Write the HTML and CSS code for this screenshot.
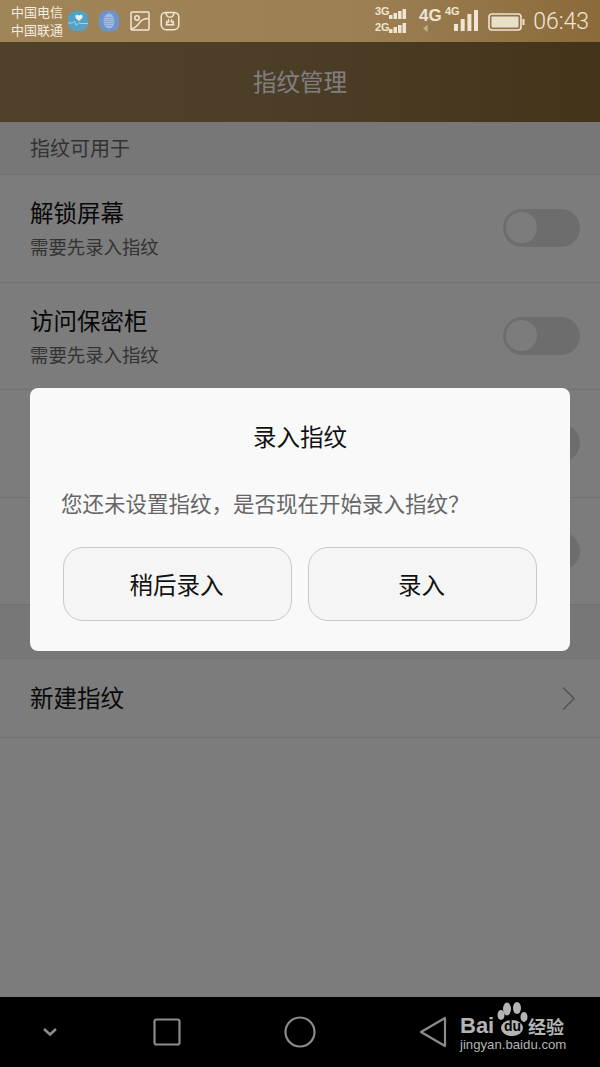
FILE: index.html
```html
<!DOCTYPE html>
<html lang="zh-CN">
<head>
    <meta charset="UTF-8">
    <meta name="viewport" content="width=device-width, initial-scale=1.0">
    <title>指纹管理</title>
    <link rel="stylesheet" href="styles.css">
</head>
<body>
    <div class="phone">
        <!-- status bar -->
        <div class="status-bar">
            <div class="carrier">
                <span>中国电信</span>
                <span>中国联通</span>
            </div>
            <div class="notify-icons">
                <svg width="22" height="22" viewBox="0 0 22 22">
                    <defs>
                        <linearGradient id="healthBg" x1="0" y1="0" x2="0" y2="1">
                            <stop offset="0" stop-color="#4aa4c4"/>
                            <stop offset="1" stop-color="#5b9fc8"/>
                        </linearGradient>
                    </defs>
                    <rect x="1" y="1" width="20" height="20" rx="8" fill="url(#healthBg)"/>
                    <path d="M12 11C8.500 8.800 8 7 8.500 5.600C9.200 4.300 11.200 4.400 12 5.800C12.800 4.400 14.800 4.300 15.500 5.600C16 7 15.500 8.800 12 11Z" fill="#e6f0f2"/>
                    <path d="M1 13H5.500L7.500 11L9.500 15.500L12 12.500L14 13.500H21" fill="none" stroke="#a8d2de" stroke-width="1"/>
                </svg>
                <svg width="22" height="22" viewBox="0 0 22 22">
                    <rect x="1" y="0.500" width="20" height="21" rx="8" fill="#6c93cc"/>
                    <ellipse cx="11" cy="11" rx="5.500" ry="7.500" fill="#a3bbdb"/>
                    <path d="M6 7.500H16M5.500 9.500H16.500M5.500 11.500H16.500M6 13.500H16M7.500 15.500H14.500" stroke="#7c9fd0" stroke-width="0.700"/>
                </svg>
                <svg width="20" height="20" viewBox="0 0 20 20" fill="none" stroke="#f2e8d6" stroke-width="1.500">
                    <rect x="1" y="1" width="18" height="18" rx="1"/>
                    <circle cx="7" cy="7" r="2.200"/>
                    <path d="M1.500 18C6.500 16.500 8 14 10 11C12 8.500 15 7.500 18.500 7.500"/>
                </svg>
                <svg width="20" height="20" viewBox="0 0 20 20" fill="none" stroke="#f2e8d6" stroke-width="1.500">
                    <path d="M5.500 1.500H14.500C17 1.500 18.800 3.500 18.800 6V13.500C18.800 16.500 16.500 18.800 13.500 18.800H6.500C3.500 18.800 1.200 16.500 1.200 13.500V6C1.200 3.500 3 1.500 5.500 1.500Z"/>
                    <path d="M6 2C6.500 5 8 6.300 10 6.300C12 6.300 13.500 5 14 2"/>
                    <g fill="#f2e8d6" stroke="none">
                        <ellipse cx="8.500" cy="10" rx="0.900" ry="2"/>
                        <ellipse cx="11.500" cy="10" rx="0.900" ry="2"/>
                        <ellipse cx="6.800" cy="11.500" rx="0.900" ry="2"/>
                        <ellipse cx="13.200" cy="11.500" rx="0.900" ry="2"/>
                        <rect x="5.500" y="13" width="9" height="1.500" rx="0.700"/>
                    </g>
                </svg>
            </div>
            <div class="net-icons">
                <svg width="32" height="42" viewBox="0 0 32 42" fill="#efe5d2">
                    <text x="0" y="15" class="net-small">3G</text>
                    <text x="0" y="31" class="net-small">2G</text>
                    <rect x="14" y="15" width="3.500" height="4"/>
                    <rect x="18.500" y="13" width="3.500" height="6"/>
                    <rect x="23" y="11" width="3.500" height="8"/>
                    <rect x="27.500" y="9" width="3.500" height="10"/>
                    <rect x="14" y="29" width="3.500" height="4"/>
                    <rect x="18.500" y="27" width="3.500" height="6"/>
                    <rect x="23" y="25" width="3.500" height="8"/>
                    <rect x="27.500" y="23" width="3.500" height="10"/>
                </svg>
                <svg class="lte" width="23" height="42" viewBox="0 0 23 42">
                    <text x="0" y="21" class="net-big" fill="#efe5d2">4G</text>
                    <path d="M8.500 25V32L4 28.500Z" fill="#c2b08c"/>
                    <path d="M10.500 25V32L15 28.500Z" fill="#8a7550"/>
                </svg>
                <svg class="lte-signal" width="33" height="42" viewBox="0 0 33 42" fill="#efe5d2">
                    <text x="0" y="15" class="net-small">4G</text>
                    <rect x="9" y="24" width="4" height="7"/>
                    <rect x="15.700" y="19" width="4" height="12"/>
                    <rect x="22.400" y="14" width="4" height="17"/>
                    <rect x="29" y="10" width="4" height="21"/>
                </svg>
                <svg class="battery" width="37" height="42" viewBox="0 0 37 42">
                    <rect x="1" y="14" width="32" height="16" rx="3" fill="none" stroke="#efe5d2" stroke-width="1.600"/>
                    <rect x="3.500" y="16.500" width="27" height="11" rx="1" fill="#e8dfc9"/>
                    <rect x="34.500" y="19" width="2" height="6" fill="#efe5d2"/>
                </svg>
                <span class="clock">06:43</span>
            </div>
        </div>

        <div class="screen">
            <div class="title-bar">指纹管理</div>

            <div class="section-head">指纹可用于</div>
            <div class="row">
                <div>
                    <div class="row-title">解锁屏幕</div>
                    <div class="row-sub">需要先录入指纹</div>
                </div>
                <div class="switch"></div>
            </div>
            <div class="row">
                <div>
                    <div class="row-title">访问保密柜</div>
                    <div class="row-sub">需要先录入指纹</div>
                </div>
                <div class="switch"></div>
            </div>
            <div class="row">
                <div></div>
                <div class="switch"></div>
            </div>
            <div class="row">
                <div></div>
                <div class="switch"></div>
            </div>
            <div class="section-head section-empty"></div>
            <div class="row row-short">
                <div class="row-title">新建指纹</div>
                <svg class="chevron" width="15" height="25" viewBox="0 0 15 25" fill="none" stroke="#a8a8a8" stroke-width="1.500">
                    <path d="M2 1.500L13 12.500L2 23.500"/>
                </svg>
            </div>

            <div class="overlay">
                <div class="dialog">
                    <h2 class="dialog-title">录入指纹</h2>
                    <p class="dialog-text">您还未设置指纹，是否现在开始录入指纹？</p>
                    <div class="dialog-buttons">
                        <button type="button">稍后录入</button>
                        <button type="button">录入</button>
                    </div>
                </div>
            </div>
        </div>

        <!-- nav bar -->
        <div class="nav-bar">
            <svg width="16" height="10" viewBox="0 0 16 10" fill="none" stroke="#8c8c8c" stroke-width="2.500">
                <path d="M2 2L8 7.500L14 2"/>
            </svg>
            <svg width="28" height="28" viewBox="0 0 28 28" fill="none" stroke="#8c8c8c" stroke-width="2.200">
                <rect x="1.500" y="1.500" width="25" height="25" rx="2"/>
            </svg>
            <svg width="32" height="32" viewBox="0 0 32 32" fill="none" stroke="#8c8c8c" stroke-width="2.200">
                <circle cx="16" cy="16" r="14.500"/>
            </svg>
            <svg width="28" height="32" viewBox="0 0 28 32" fill="none" stroke="#8c8c8c" stroke-width="2.200">
                <path d="M26 2V30L2 16Z" stroke-linejoin="round"/>
            </svg>

            <div class="watermark">
                <div class="wm-top">
                    <span class="wm-bai">Bai</span>
                    <div class="wm-paw">
                        <svg width="32" height="34" viewBox="0 0 32 34" fill="#b4b4b4">
                            <ellipse cx="10" cy="7" rx="4" ry="6.500"/>
                            <ellipse cx="20" cy="6" rx="4" ry="6"/>
                            <ellipse cx="4" cy="13" rx="3.500" ry="5"/>
                            <ellipse cx="27" cy="15" rx="3.500" ry="5"/>
                            <ellipse cx="15" cy="26" rx="11" ry="8"/>
                        </svg>
                        <span class="wm-du">du</span>
                    </div>
                    <span class="wm-cn">经验</span>
                </div>
                <div class="wm-url">jingyan.baidu.com</div>
            </div>
        </div>
    </div>
</body>
</html>
```

FILE: styles.css
```css
* {
    box-sizing: border-box;
}
body {
    margin: 0;
    font-family: "Noto Sans CJK SC", "Noto Sans", sans-serif;
    background-color: #000;
}
.phone {
    position: relative;
    width: 600px;
    height: 1067px;
    display: flex;
    flex-direction: column;
    overflow: hidden;
}

/* status bar */
.status-bar {
    height: 42px;
    display: flex;
    align-items: center;
    padding: 0 11px;
    background: linear-gradient(90deg, #a08558 0%, #9c8054 60%, #8b6a3a 100%);
    color: #f5eddf;
}
.carrier {
    display: flex;
    flex-direction: column;
    font-size: 13px;
    line-height: 18px;
    width: 56px;
}
.notify-icons {
    display: flex;
    align-items: center;
    gap: 9px;
}
.notify-icons svg:nth-child(3),
.notify-icons svg:nth-child(4) {
    margin-left: 1px;
}
.net-icons {
    margin-left: auto;
    display: flex;
    align-items: center;
}
.net-small {
    font-family: "Liberation Sans", sans-serif;
    font-size: 11px;
    font-weight: bold;
}
.net-big {
    font-family: "Liberation Sans", sans-serif;
    font-size: 17px;
    font-weight: bold;
}
.lte {
    margin-left: 12px;
}
.lte-signal {
    margin-left: 3px;
}
.battery {
    margin-left: 10px;
}
.clock {
    margin-left: 8px;
    font-family: "Roboto", sans-serif;
    font-size: 23px;
    font-weight: 300;
    color: #f0e7d5;
}

/* page under the dialog */
.screen {
    position: relative;
    flex: 1;
    background-color: #f8f8f8;
}
.title-bar {
    height: 80px;
    padding-bottom: 3px;
    display: flex;
    align-items: center;
    justify-content: center;
    background: linear-gradient(90deg, #a08254 0%, #9a7c50 45%, #886832 100%);
    color: #fff;
    font-size: 23.500px;
}
.section-head {
    height: 53px;
    padding: 9px 30px 0;
    background-color: #eeeeee;
    border-bottom: 1px solid #e4e4e4;
    color: #666;
    font-size: 20px;
    line-height: 34px;
}
.section-empty {
    height: 54px;
}
.row {
    height: 107.500px;
    padding: 0 20px 0 30px;
    display: flex;
    align-items: center;
    justify-content: space-between;
    border-bottom: 1px solid #e4e4e4;
}
.row-short {
    height: 79px;
}
.row-short .row-title {
    margin-top: -2px;
}
.row-title {
    color: #111;
    font-size: 23.500px;
    line-height: 34px;
}
.row-sub {
    margin-top: 2px;
    color: #666;
    font-size: 18.400px;
    line-height: 30px;
}
.switch {
    position: relative;
    width: 77px;
    height: 38px;
    border-radius: 19px;
    background-color: #dadada;
}
.switch::after {
    content: "";
    position: absolute;
    left: 3px;
    top: 3px;
    width: 31px;
    height: 31px;
    border-radius: 50%;
    background-color: #f8f8f8;
}
.chevron {
    margin-right: 4px;
}

/* dialog */
.overlay {
    position: absolute;
    inset: 0;
    padding: 346px 30px 0;
    background-color: rgba(0, 0, 0, 0.5);
}
.dialog {
    height: 263px;
    padding: 31px 33px 0;
    border-radius: 8px;
    background-color: #f9f9f9;
}
.dialog-title {
    margin: 0;
    text-align: center;
    color: #111;
    font-size: 23.500px;
    font-weight: normal;
    line-height: 34px;
}
.dialog-text {
    margin: 33px 0 0 -2px;
    color: #666;
    font-size: 21.500px;
    line-height: 34px;
    white-space: nowrap;
}
.dialog-buttons {
    margin-top: 27px;
    display: flex;
    gap: 16px;
}
.dialog-buttons button {
    flex: 1;
    height: 74px;
    padding: 0 2px 0 0;
    border: 1px solid #c8c8c8;
    border-radius: 20px;
    background-color: #f5f5f5;
    color: #111;
    font-family: inherit;
    font-size: 23.500px;
}

/* nav bar */
.nav-bar {
    position: relative;
    height: 70px;
    display: grid;
    grid-template-columns: 100px 133px 133px 134px;
    justify-items: center;
    align-items: center;
    background-color: #000;
}
.watermark {
    position: absolute;
    left: 460px;
    top: 5px;
    color: #b4b4b4;
}
.wm-top {
    display: flex;
    align-items: flex-end;
    height: 34px;
}
.wm-bai {
    width: 37px;
    margin-bottom: -1px;
    font-family: "Liberation Sans", sans-serif;
    font-size: 22px;
    font-weight: bold;
    line-height: 22px;
}
.wm-paw {
    position: relative;
    width: 32px;
    height: 34px;
}
.wm-du {
    position: absolute;
    left: 7px;
    top: 17px;
    color: #000;
    font-family: "Liberation Sans", sans-serif;
    font-size: 14px;
    font-weight: bold;
    line-height: 15px;
}
.wm-cn {
    margin-bottom: -2px;
    margin-left: -1px;
    font-size: 18px;
    font-weight: bold;
    line-height: 24px;
}
.wm-url {
    margin-top: 1px;
    font-family: "Liberation Sans", sans-serif;
    font-size: 13.200px;
    line-height: 16px;
    white-space: nowrap;
}
```
